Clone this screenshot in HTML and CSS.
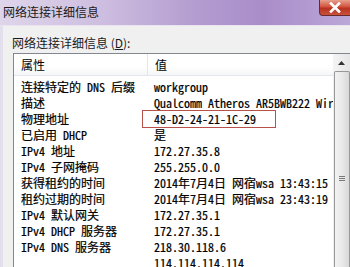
FILE: index.html
```html
<!DOCTYPE html>
<html>
<head>
<meta charset="utf-8">
<link rel="stylesheet" href="styles.css">
</head>
<body>
<div class="window">
  <div class="titlebar">
    <span class="title">网络连接详细信息</span>
    <span class="close">
      <svg width="14" height="11" viewBox="0 0 14 11"><path d="M3 1.5 L11 9.5 M11 1.5 L3 9.5" stroke="#fff" stroke-width="2.6" stroke-linecap="square"/></svg>
    </span>
  </div>
  <div class="client">
    <div class="label">网络连接详细信息 (<u>D</u>):</div>
    <div class="list">
      <div class="table">
        <div class="head">
          <div class="hcell c1">属性</div>
          <div class="hcell c2">值</div>
        </div>
        <div class="rows">
          <div class="row"><div class="c1">连接特定的 DNS 后缀</div><div class="c2">workgroup</div></div>
          <div class="row"><div class="c1">描述</div><div class="c2">Qualcomm Atheros AR5BWB222 Wireless</div></div>
          <div class="row"><div class="c1">物理地址</div><div class="c2 mark">48-D2-24-21-1C-29<span class="redbox"></span></div></div>
          <div class="row"><div class="c1">已启用 DHCP</div><div class="c2">是</div></div>
          <div class="row"><div class="c1">IPv4 地址</div><div class="c2">172.27.35.8</div></div>
          <div class="row"><div class="c1">IPv4 子网掩码</div><div class="c2">255.255.0.0</div></div>
          <div class="row"><div class="c1">获得租约的时间</div><div class="c2">2014年7月4日 网宿wsa 13:43:15</div></div>
          <div class="row"><div class="c1">租约过期的时间</div><div class="c2">2014年7月4日 网宿wsa 23:43:19</div></div>
          <div class="row"><div class="c1">IPv4 默认网关</div><div class="c2">172.27.35.1</div></div>
          <div class="row"><div class="c1">IPv4 DHCP 服务器</div><div class="c2">172.27.35.1</div></div>
          <div class="row"><div class="c1">IPv4 DNS 服务器</div><div class="c2">218.30.118.6</div></div>
          <div class="row"><div class="c1"></div><div class="c2">114.114.114.114</div></div>
        </div>
      </div>
      <div class="scrollbar">
        <div class="sbtn"><svg width="7" height="4" viewBox="0 0 7 4"><path d="M0 4 L3.5 0 L7 4 Z" fill="#333"/></svg></div>
        <div class="thumb"><div class="grip"></div></div>
      </div>
    </div>
  </div>
</div>
</body>
</html>
```

FILE: styles.css
```css
html, body {
  margin: 0;
  padding: 0;
  width: 350px;
  height: 267px;
  overflow: hidden;
  background: #f0f0f0;
}
.window {
  width: 350px;
  height: 267px;
  display: flex;
  flex-direction: column;
  font-family: "Noto Sans Mono CJK SC", "Noto Sans CJK SC", "Liberation Mono", monospace;
  color: #000;
}
.titlebar {
  height: 25px;
  flex: none;
  display: flex;
  justify-content: space-between;
  align-items: flex-start;
  background: linear-gradient(90deg, #ded5ea 0%, #cdbde0 30%, #b49dd0 55%, #a98dc9 75%, #bba7d8 100%);
  border-bottom: 1px solid #e9e4f0;
}
.title {
  font-family: "Noto Sans CJK SC", sans-serif;
  font-size: 12px;
  line-height: 16px;
  margin: 4px 0 0 3px;
  color: #1a1a1a;
}
.close {
  width: 32px;
  height: 16px;
  margin-right: -1px;
  display: flex;
  align-items: center;
  justify-content: center;
  background: linear-gradient(180deg, #e6a08f 0%, #d2533d 45%, #b8321f 55%, #c9523d 100%);
  border: 1px solid #6b2a2a;
  border-top: none;
  border-radius: 0 0 0 4px;
  box-sizing: border-box;
}
.client {
  flex: 1;
  min-height: 0;
  display: flex;
  flex-direction: column;
  border-left: 3px solid #e4dfec;
}
.label {
  font-family: "Noto Sans CJK SC", sans-serif;
  font-size: 12px;
  line-height: 16px;
  margin: 9px 0 0 9px;
  color: #1a1a1a;
}
.list {
  margin: 2px 0 0 10px;
  flex: 1;
  min-height: 0;
  display: flex;
  background: #fff;
  border: 1px solid #828790;
  border-right: none;
  border-bottom: none;
}
.table {
  flex: 1;
  min-width: 0;
  overflow: hidden;
}
.head {
  display: flex;
  height: 21px;
  border-bottom: 1px solid #e3e6ea;
  background: linear-gradient(180deg, #ffffff 0%, #ffffff 60%, #f5f6f7 100%);
}
.hcell {
  font-family: "Noto Sans CJK SC", sans-serif;
  font-size: 12px;
  line-height: 21px;
}
.hcell.c1 {
  border-right: 1px solid #e3e6ea;
}
.c1 {
  width: 126px;
  flex: none;
  padding-left: 7px;
}
.c2 {
  padding-left: 7px;
  white-space: nowrap;
}
.rows {
  padding-top: 3px;
}
.row {
  display: flex;
  font-size: 12px;
  line-height: 16px;
  height: 16px;
  white-space: nowrap;
  -webkit-text-stroke: 0.2px #000;
}
.mark {
  position: relative;
}
.redbox {
  position: absolute;
  left: -5px;
  top: -1px;
  width: 134px;
  height: 18px;
  border: 1px solid #b8504c;
  box-sizing: border-box;
}
.scrollbar {
  width: 17px;
  flex: none;
  display: flex;
  flex-direction: column;
  background: #f0f0f0;
}
.sbtn {
  height: 17px;
  display: flex;
  align-items: center;
  justify-content: center;
  background: linear-gradient(90deg, #f4f4f4, #e6e6e6);
}
.thumb {
  flex: 1;
  margin: 0 0 0 1px;
  border: 1px solid #979797;
  border-bottom: none;
  border-radius: 2px 2px 0 0;
  background: linear-gradient(90deg, #f3f3f3 0%, #e9e9e9 50%, #d9d9d9 100%);
  position: relative;
}
.grip {
  position: absolute;
  left: 4px;
  top: 104px;
  width: 6px;
  height: 5px;
  background: repeating-linear-gradient(180deg, #7a7a7a 0 1px, transparent 1px 2px);
}
```
